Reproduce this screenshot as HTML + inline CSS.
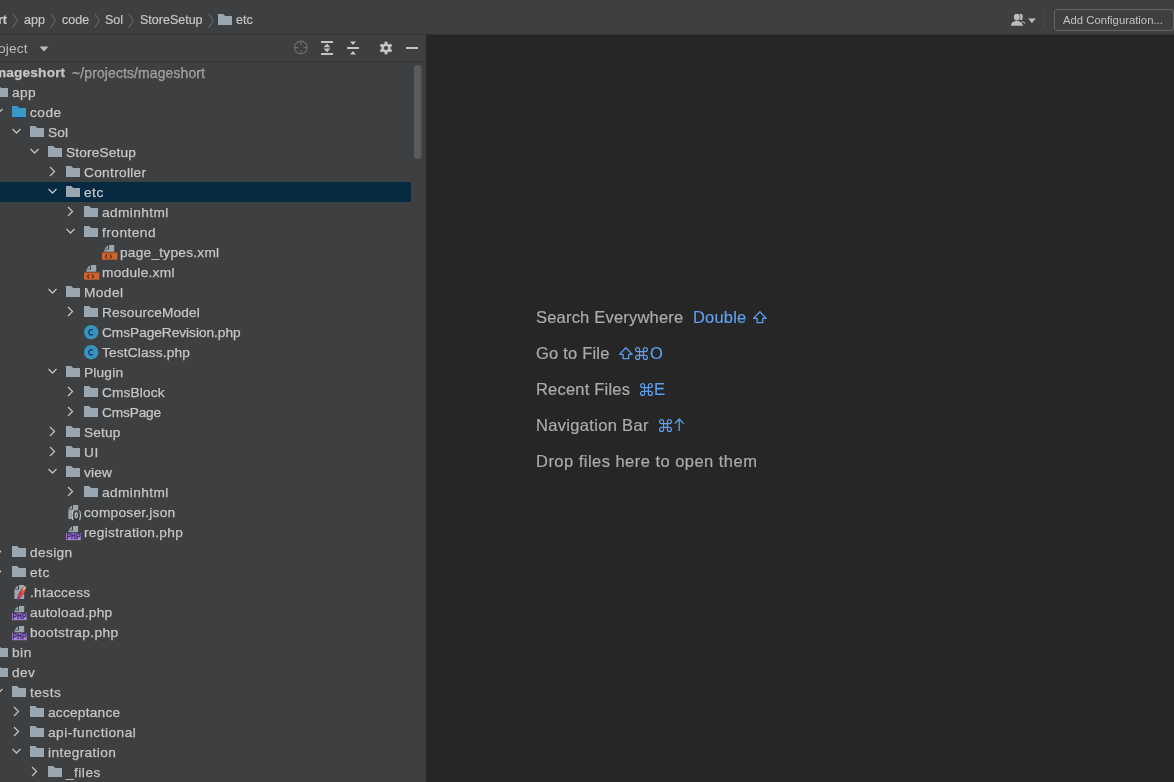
<!DOCTYPE html>
<html><head><meta charset="utf-8"><style>
html,body{margin:0;padding:0;}
body{width:1174px;height:782px;overflow:hidden;position:relative;background:#262626;font-family:"Liberation Sans",sans-serif;}
.ic{position:absolute;display:block;}
#top{position:absolute;left:0;top:0;width:1174px;height:34px;background:#3D3F41;border-bottom:1px solid #313335;}
.bc{will-change:transform;-webkit-text-stroke:0.2px currentColor;position:absolute;top:2px;height:34px;line-height:36px;font-size:12.5px;color:#C6C6C6;white-space:nowrap;}
#panel{position:absolute;left:0;top:35px;width:426px;height:747px;background:#3D3F41;overflow:hidden;}
#hdr{position:absolute;left:0;top:0;width:426px;height:26px;border-bottom:1px solid #323436;}
#div{position:absolute;left:426px;top:35px;width:1px;height:747px;background:#2B2B2B;}
#tree{position:absolute;left:0;top:-35px;width:426px;height:782px;}
.t{will-change:transform;-webkit-text-stroke:0.25px #C6C6C6;position:absolute;height:20px;line-height:20px;font-size:13.7px;letter-spacing:0.15px;color:#C6C6C6;white-space:nowrap;}
.gray{color:#8C8C8C;}
.sel{position:absolute;left:0;width:411px;height:20px;background:#052A42;}
#editor{position:absolute;left:427px;top:35px;width:747px;height:747px;background:#262626;}
.w{will-change:transform;-webkit-text-stroke:0.2px currentColor;position:absolute;height:36px;line-height:36px;font-size:16.5px;color:#ABABAB;white-space:nowrap;}
.k{color:#5B9BE6;}
</style></head><body>
<div id="top">
<div class="bc" style="left:-60px;font-weight:bold;width:67px;text-align:right">mageshort</div>
<svg class="ic" style="left:12px;top:13px" width="7" height="15" viewBox="0 0 7 15"><path d="M0.7 0.5L5.5 7.5L0.7 14.5" stroke="#6E6E6E" stroke-width="1" fill="none"/></svg>
<div class="bc" style="left:24px">app</div>
<svg class="ic" style="left:50px;top:13px" width="7" height="15" viewBox="0 0 7 15"><path d="M0.7 0.5L5.5 7.5L0.7 14.5" stroke="#6E6E6E" stroke-width="1" fill="none"/></svg>
<div class="bc" style="left:62px">code</div>
<svg class="ic" style="left:94px;top:13px" width="7" height="15" viewBox="0 0 7 15"><path d="M0.7 0.5L5.5 7.5L0.7 14.5" stroke="#6E6E6E" stroke-width="1" fill="none"/></svg>
<div class="bc" style="left:105px">Sol</div>
<svg class="ic" style="left:128px;top:13px" width="7" height="15" viewBox="0 0 7 15"><path d="M0.7 0.5L5.5 7.5L0.7 14.5" stroke="#6E6E6E" stroke-width="1" fill="none"/></svg>
<div class="bc" style="left:140px">StoreSetup</div>
<svg class="ic" style="left:208px;top:13px" width="7" height="15" viewBox="0 0 7 15"><path d="M0.7 0.5L5.5 7.5L0.7 14.5" stroke="#6E6E6E" stroke-width="1" fill="none"/></svg>
<svg class="ic" style="left:218px;top:14px" width="14" height="12" viewBox="0 0 14 12"><path d="M0 0H5.2L7.2 2H14V11H0Z" fill="#9AA7B0"/></svg>
<div class="bc" style="left:236px">etc</div>
<svg class="ic" style="left:1010px;top:13px" width="27" height="14" viewBox="0 0 27 14">
<ellipse cx="10.6" cy="3.9" rx="2.2" ry="3.1" fill="#BCBCBC"/>
<path d="M9 8C12 7.6 14.8 8.6 15.2 10.2V10.9L13.2 9.6Z" fill="#BCBCBC"/>
<g stroke="#3D3F41" stroke-width="1.1"><ellipse cx="6.8" cy="4.1" rx="3" ry="3.4"/><path d="M0.8 12.7C1 9.4 3.5 7.9 6.8 7.9C10.1 7.9 12.6 9.4 13 12.7Z"/></g>
<ellipse cx="6.8" cy="4.1" rx="3" ry="3.4" fill="#BCBCBC"/>
<path d="M0.8 12.7C1 9.4 3.5 7.9 6.8 7.9C10.1 7.9 12.6 9.4 13 12.7Z" fill="#BCBCBC"/>
<path d="M18 5.5H25.8L21.9 9.9Z" fill="#BCBCBC"/>
</svg>
<div style="position:absolute;left:1044px;top:12px;width:1px;height:16px;background:repeating-linear-gradient(#4E5052 0 2px,transparent 2px 4px)"></div>
<div style="position:absolute;left:1054px;top:9px;width:118px;height:20px;border:1px solid #626466;border-radius:3px;background:#3D3F41"></div>
<div style="will-change:transform;position:absolute;left:1063px;top:9px;height:22px;line-height:22px;font-size:11.3px;color:#C2C2C2;white-space:nowrap">Add Configuration...</div>
</div>
<div id="panel">
<div id="hdr">
<div style="will-change:transform;position:absolute;left:-16px;top:1px;height:26px;line-height:26px;font-size:13.7px;letter-spacing:0.15px;color:#BBBBBB">Project</div>
<svg class="ic" style="left:39px;top:11px" width="10" height="6" viewBox="0 0 10 6"><path d="M0.5 0.5H9.5L5 5.5Z" fill="#BBBBBB"/></svg>
<svg class="ic" style="left:293px;top:5px" width="16" height="16" viewBox="0 0 16 16"><circle cx="7.8" cy="7.6" r="6.4" stroke="#6E6E6E" stroke-width="1.2" fill="none"/><path d="M7.8 1.6V5M7.8 10.2V13.6M1.6 7.6H5M10.6 7.6H14" stroke="#6E6E6E" stroke-width="1.2"/></svg>
<svg class="ic" style="left:319px;top:5px" width="16" height="16" viewBox="0 0 16 16"><path d="M2 1H14V3H2Z M2 13H14V15H2Z" fill="#C4C4C4"/><path d="M8 3.6L11.4 7.3H4.6Z M8 12.2L11.4 8.5H4.6Z" fill="#C4C4C4"/></svg>
<svg class="ic" style="left:345px;top:5px" width="16" height="16" viewBox="0 0 16 16"><path d="M2 7H14V9H2Z" fill="#C4C4C4"/><path d="M5 1.5H11L8 5Z M5 14.5H11L8 11Z" fill="#C4C4C4"/></svg>
<svg class="ic" style="left:378px;top:5px" width="16" height="16" viewBox="0 0 16 16"><g fill="#C4C4C4"><circle cx="8" cy="8" r="4.6"/><rect x="6.5" y="1.5" width="3" height="13" rx="1"/><rect x="6.5" y="1.5" width="3" height="13" rx="1" transform="rotate(60 8 8)"/><rect x="6.5" y="1.5" width="3" height="13" rx="1" transform="rotate(120 8 8)"/></g><circle cx="8" cy="8" r="2" fill="#3D3F41"/></svg>
<div style="position:absolute;left:406px;top:12px;width:12px;height:2px;background:#C4C4C4"></div>
</div>
<div id="tree">
<div class="t" style="left:-6px;top:63px;font-weight:bold">mageshort</div>
<div class="t gray" style="left:72px;top:63px;font-size:13.9px">~/projects/mageshort</div>
<svg class="ic" style="left:-25px;top:87px" width="12" height="8" viewBox="0 0 12 8"><path d="M1.5 2L5.5 6L9.5 2" stroke="#C2C2C2" stroke-width="1.25" fill="none"/></svg>
<svg class="ic" style="left:-6px;top:86px" width="14" height="12" viewBox="0 0 14 12"><path d="M0 0H5.2L7.2 2H14V11H0Z" fill="#9AA7B0"/></svg>
<div class="t" style="left:12px;top:83px;letter-spacing:0.4px">app</div>
<svg class="ic" style="left:-7px;top:107px" width="12" height="8" viewBox="0 0 12 8"><path d="M1.5 2L5.5 6L9.5 2" stroke="#C2C2C2" stroke-width="1.25" fill="none"/></svg>
<svg class="ic" style="left:12px;top:106px" width="14" height="12" viewBox="0 0 14 12"><path d="M0 0H5.2L7.2 2H14V11H0Z" fill="#3A98C6"/><rect x="3" y="11" width="9" height="1.2" fill="#0B3C8A"/></svg>
<div class="t" style="left:30px;top:103px;letter-spacing:0.483px">code</div>
<svg class="ic" style="left:11px;top:127px" width="12" height="8" viewBox="0 0 12 8"><path d="M1.5 2L5.5 6L9.5 2" stroke="#C2C2C2" stroke-width="1.25" fill="none"/></svg>
<svg class="ic" style="left:30px;top:126px" width="14" height="12" viewBox="0 0 14 12"><path d="M0 0H5.2L7.2 2H14V11H0Z" fill="#9AA7B0"/></svg>
<div class="t" style="left:48px;top:123px;letter-spacing:0.15px">Sol</div>
<svg class="ic" style="left:29px;top:147px" width="12" height="8" viewBox="0 0 12 8"><path d="M1.5 2L5.5 6L9.5 2" stroke="#C2C2C2" stroke-width="1.25" fill="none"/></svg>
<svg class="ic" style="left:48px;top:146px" width="14" height="12" viewBox="0 0 14 12"><path d="M0 0H5.2L7.2 2H14V11H0Z" fill="#9AA7B0"/></svg>
<div class="t" style="left:66px;top:143px;letter-spacing:0.161px">StoreSetup</div>
<svg class="ic" style="left:49px;top:166px" width="8" height="12" viewBox="0 0 8 12"><path d="M1 1L5.5 5.5L1 10" stroke="#C2C2C2" stroke-width="1.25" fill="none"/></svg>
<svg class="ic" style="left:66px;top:166px" width="14" height="12" viewBox="0 0 14 12"><path d="M0 0H5.2L7.2 2H14V11H0Z" fill="#9AA7B0"/></svg>
<div class="t" style="left:84px;top:163px;letter-spacing:0.306px">Controller</div>
<div class="sel" style="top:182px"></div>
<svg class="ic" style="left:47px;top:187px" width="12" height="8" viewBox="0 0 12 8"><path d="M1.5 2L5.5 6L9.5 2" stroke="#C2C2C2" stroke-width="1.25" fill="none"/></svg>
<svg class="ic" style="left:66px;top:186px" width="14" height="12" viewBox="0 0 14 12"><path d="M0 0H5.2L7.2 2H14V11H0Z" fill="#9AA7B0"/></svg>
<div class="t" style="left:84px;top:183px;letter-spacing:0.5px">etc</div>
<svg class="ic" style="left:67px;top:206px" width="8" height="12" viewBox="0 0 8 12"><path d="M1 1L5.5 5.5L1 10" stroke="#C2C2C2" stroke-width="1.25" fill="none"/></svg>
<svg class="ic" style="left:84px;top:206px" width="14" height="12" viewBox="0 0 14 12"><path d="M0 0H5.2L7.2 2H14V11H0Z" fill="#9AA7B0"/></svg>
<div class="t" style="left:102px;top:203px;letter-spacing:0.388px">adminhtml</div>
<svg class="ic" style="left:65px;top:227px" width="12" height="8" viewBox="0 0 12 8"><path d="M1.5 2L5.5 6L9.5 2" stroke="#C2C2C2" stroke-width="1.25" fill="none"/></svg>
<svg class="ic" style="left:84px;top:226px" width="14" height="12" viewBox="0 0 14 12"><path d="M0 0H5.2L7.2 2H14V11H0Z" fill="#9AA7B0"/></svg>
<div class="t" style="left:102px;top:223px;letter-spacing:0.479px">frontend</div>
<svg class="ic" style="left:101.6px;top:244px" width="16" height="16" viewBox="0 0 16 16"><path d="M2.6 4.8L6 1.2V4.8Z" fill="#9AA7B0"/><path d="M7 1H12.2V7.8H2.4V5.6H7Z" fill="#9AA7B0"/><rect x="0" y="8.3" width="15.4" height="7.4" fill="#CC652F"/><rect x="0" y="8.3" width="15.4" height="0.8" fill="#8A4A1E"/><path d="M5.1 10.4L3.4 12.4L5.1 14.4M7.8 10.4L9.6 12.4L7.8 14.4" stroke="#6A2608" stroke-width="1.1" fill="none"/></svg>
<div class="t" style="left:120px;top:243px;letter-spacing:0.25px">page_types.xml</div>
<svg class="ic" style="left:83.6px;top:264px" width="16" height="16" viewBox="0 0 16 16"><path d="M2.6 4.8L6 1.2V4.8Z" fill="#9AA7B0"/><path d="M7 1H12.2V7.8H2.4V5.6H7Z" fill="#9AA7B0"/><rect x="0" y="8.3" width="15.4" height="7.4" fill="#CC652F"/><rect x="0" y="8.3" width="15.4" height="0.8" fill="#8A4A1E"/><path d="M5.1 10.4L3.4 12.4L5.1 14.4M7.8 10.4L9.6 12.4L7.8 14.4" stroke="#6A2608" stroke-width="1.1" fill="none"/></svg>
<div class="t" style="left:102px;top:263px;letter-spacing:0.272px">module.xml</div>
<svg class="ic" style="left:47px;top:287px" width="12" height="8" viewBox="0 0 12 8"><path d="M1.5 2L5.5 6L9.5 2" stroke="#C2C2C2" stroke-width="1.25" fill="none"/></svg>
<svg class="ic" style="left:66px;top:286px" width="14" height="12" viewBox="0 0 14 12"><path d="M0 0H5.2L7.2 2H14V11H0Z" fill="#9AA7B0"/></svg>
<div class="t" style="left:84px;top:283px;letter-spacing:0.425px">Model</div>
<svg class="ic" style="left:67px;top:306px" width="8" height="12" viewBox="0 0 8 12"><path d="M1 1L5.5 5.5L1 10" stroke="#C2C2C2" stroke-width="1.25" fill="none"/></svg>
<svg class="ic" style="left:84px;top:306px" width="14" height="12" viewBox="0 0 14 12"><path d="M0 0H5.2L7.2 2H14V11H0Z" fill="#9AA7B0"/></svg>
<div class="t" style="left:102px;top:303px;letter-spacing:0.17px">ResourceModel</div>
<svg class="ic" style="left:83.8px;top:324.8px" width="16" height="16" viewBox="0 0 16 16"><circle cx="7.2" cy="7.2" r="7.2" fill="#3894BD"/><path d="M8.9 5.3A2.5 2.6 0 1 0 8.9 9.3" stroke="#0F3A78" stroke-width="1.3" fill="none"/></svg>
<div class="t" style="left:102px;top:323px;letter-spacing:-0.033px">CmsPageRevision.php</div>
<svg class="ic" style="left:83.8px;top:344.8px" width="16" height="16" viewBox="0 0 16 16"><circle cx="7.2" cy="7.2" r="7.2" fill="#3894BD"/><path d="M8.9 5.3A2.5 2.6 0 1 0 8.9 9.3" stroke="#0F3A78" stroke-width="1.3" fill="none"/></svg>
<div class="t" style="left:102px;top:343px;letter-spacing:0.167px">TestClass.php</div>
<svg class="ic" style="left:47px;top:367px" width="12" height="8" viewBox="0 0 12 8"><path d="M1.5 2L5.5 6L9.5 2" stroke="#C2C2C2" stroke-width="1.25" fill="none"/></svg>
<svg class="ic" style="left:66px;top:366px" width="14" height="12" viewBox="0 0 14 12"><path d="M0 0H5.2L7.2 2H14V11H0Z" fill="#9AA7B0"/></svg>
<div class="t" style="left:84px;top:363px;letter-spacing:0.19px">Plugin</div>
<svg class="ic" style="left:67px;top:386px" width="8" height="12" viewBox="0 0 8 12"><path d="M1 1L5.5 5.5L1 10" stroke="#C2C2C2" stroke-width="1.25" fill="none"/></svg>
<svg class="ic" style="left:84px;top:386px" width="14" height="12" viewBox="0 0 14 12"><path d="M0 0H5.2L7.2 2H14V11H0Z" fill="#9AA7B0"/></svg>
<div class="t" style="left:102px;top:383px;letter-spacing:0.136px">CmsBlock</div>
<svg class="ic" style="left:67px;top:406px" width="8" height="12" viewBox="0 0 8 12"><path d="M1 1L5.5 5.5L1 10" stroke="#C2C2C2" stroke-width="1.25" fill="none"/></svg>
<svg class="ic" style="left:84px;top:406px" width="14" height="12" viewBox="0 0 14 12"><path d="M0 0H5.2L7.2 2H14V11H0Z" fill="#9AA7B0"/></svg>
<div class="t" style="left:102px;top:403px;letter-spacing:-0.15px">CmsPage</div>
<svg class="ic" style="left:49px;top:426px" width="8" height="12" viewBox="0 0 8 12"><path d="M1 1L5.5 5.5L1 10" stroke="#C2C2C2" stroke-width="1.25" fill="none"/></svg>
<svg class="ic" style="left:66px;top:426px" width="14" height="12" viewBox="0 0 14 12"><path d="M0 0H5.2L7.2 2H14V11H0Z" fill="#9AA7B0"/></svg>
<div class="t" style="left:84px;top:423px;letter-spacing:0.175px">Setup</div>
<svg class="ic" style="left:49px;top:446px" width="8" height="12" viewBox="0 0 8 12"><path d="M1 1L5.5 5.5L1 10" stroke="#C2C2C2" stroke-width="1.25" fill="none"/></svg>
<svg class="ic" style="left:66px;top:446px" width="14" height="12" viewBox="0 0 14 12"><path d="M0 0H5.2L7.2 2H14V11H0Z" fill="#9AA7B0"/></svg>
<div class="t" style="left:84px;top:443px;letter-spacing:0.5px">UI</div>
<svg class="ic" style="left:47px;top:467px" width="12" height="8" viewBox="0 0 12 8"><path d="M1.5 2L5.5 6L9.5 2" stroke="#C2C2C2" stroke-width="1.25" fill="none"/></svg>
<svg class="ic" style="left:66px;top:466px" width="14" height="12" viewBox="0 0 14 12"><path d="M0 0H5.2L7.2 2H14V11H0Z" fill="#9AA7B0"/></svg>
<div class="t" style="left:84px;top:463px;letter-spacing:0.15px">view</div>
<svg class="ic" style="left:67px;top:486px" width="8" height="12" viewBox="0 0 8 12"><path d="M1 1L5.5 5.5L1 10" stroke="#C2C2C2" stroke-width="1.25" fill="none"/></svg>
<svg class="ic" style="left:84px;top:486px" width="14" height="12" viewBox="0 0 14 12"><path d="M0 0H5.2L7.2 2H14V11H0Z" fill="#9AA7B0"/></svg>
<div class="t" style="left:102px;top:483px;letter-spacing:0.388px">adminhtml</div>
<svg class="ic" style="left:66px;top:504px" width="17" height="17" viewBox="0 0 17 17"><path d="M2.6 4.8L6 1.2V4.8Z" fill="#9AA7B0"/><path d="M7 1H12.2V14.9H2.4V5.6H7Z" fill="#9AA7B0"/><ellipse cx="10.3" cy="11.3" rx="5" ry="5" fill="#303234" opacity="0.85"/><path d="M7.4 6.9C6.2 6.9 6.5 8.6 6.4 9.9C6.3 10.8 5.9 11.3 5.4 11.3C5.9 11.3 6.3 11.8 6.4 12.7C6.5 14 6.2 15.7 7.4 15.7M13.2 6.9C14.4 6.9 14.1 8.6 14.2 9.9C14.3 10.8 14.7 11.3 15.2 11.3C14.7 11.3 14.3 11.8 14.2 12.7C14.1 14 14.4 15.7 13.2 15.7" stroke="#C5CBCF" stroke-width="1.2" fill="none"/><ellipse cx="10.3" cy="11.3" rx="1.1" ry="2.4" stroke="#C5CBCF" stroke-width="1.1" fill="none"/></svg>
<div class="t" style="left:84px;top:503px;letter-spacing:0.242px">composer.json</div>
<svg class="ic" style="left:66px;top:525px" width="16" height="16" viewBox="0 0 16 16"><path d="M2.6 4.8L6 1.2V4.8Z" fill="#9AA7B0"/><path d="M7 1H12.2V7.2H2.4V5.6H7Z" fill="#9AA7B0"/><rect x="0" y="8" width="14.8" height="7.2" fill="#A585D2"/><text x="0.5" y="14.4" font-family="Liberation Sans" font-weight="bold" font-size="8.6" textLength="14" lengthAdjust="spacingAndGlyphs" fill="#47307A" stroke="#47307A" stroke-width="0.35">PHP</text></svg>
<div class="t" style="left:84px;top:523px;letter-spacing:0.297px">registration.php</div>
<svg class="ic" style="left:-5px;top:546px" width="8" height="12" viewBox="0 0 8 12"><path d="M1 1L5.5 5.5L1 10" stroke="#C2C2C2" stroke-width="1.25" fill="none"/></svg>
<svg class="ic" style="left:12px;top:546px" width="14" height="12" viewBox="0 0 14 12"><path d="M0 0H5.2L7.2 2H14V11H0Z" fill="#9AA7B0"/></svg>
<div class="t" style="left:30px;top:543px;letter-spacing:0.37px">design</div>
<svg class="ic" style="left:-5px;top:566px" width="8" height="12" viewBox="0 0 8 12"><path d="M1 1L5.5 5.5L1 10" stroke="#C2C2C2" stroke-width="1.25" fill="none"/></svg>
<svg class="ic" style="left:12px;top:566px" width="14" height="12" viewBox="0 0 14 12"><path d="M0 0H5.2L7.2 2H14V11H0Z" fill="#9AA7B0"/></svg>
<div class="t" style="left:30px;top:563px;letter-spacing:0.5px">etc</div>
<svg class="ic" style="left:12px;top:584px" width="17" height="17" viewBox="0 0 17 17"><path d="M2.6 4.8L6 1.2V4.8Z" fill="#9AA7B0"/><path d="M7 1H12.2V15H2.4V5.6H7Z" fill="#9AA7B0"/><path d="M5 15.5C5.5 11 8.5 5 13.8 1.8C14.6 5.5 11.5 11.5 6.5 15.5Z" fill="#9C2C78"/><path d="M6.6 13C8 9 10.5 5 13.8 1.8C14.3 4.5 12.5 9 8.5 12.5Z" fill="#E0622C"/><path d="M10.5 5.5C11.5 4 12.6 2.6 13.8 1.8C14 3.2 13.2 5 12 6.5Z" fill="#F2C35A"/><ellipse cx="8.6" cy="9.8" rx="1.2" ry="1.5" fill="#E8203A"/></svg>
<div class="t" style="left:30px;top:583px;letter-spacing:0.287px">.htaccess</div>
<svg class="ic" style="left:12px;top:605px" width="16" height="16" viewBox="0 0 16 16"><path d="M2.6 4.8L6 1.2V4.8Z" fill="#9AA7B0"/><path d="M7 1H12.2V7.2H2.4V5.6H7Z" fill="#9AA7B0"/><rect x="0" y="8" width="14.8" height="7.2" fill="#A585D2"/><text x="0.5" y="14.4" font-family="Liberation Sans" font-weight="bold" font-size="8.6" textLength="14" lengthAdjust="spacingAndGlyphs" fill="#47307A" stroke="#47307A" stroke-width="0.35">PHP</text></svg>
<div class="t" style="left:30px;top:603px;letter-spacing:0.277px">autoload.php</div>
<svg class="ic" style="left:12px;top:625px" width="16" height="16" viewBox="0 0 16 16"><path d="M2.6 4.8L6 1.2V4.8Z" fill="#9AA7B0"/><path d="M7 1H12.2V7.2H2.4V5.6H7Z" fill="#9AA7B0"/><rect x="0" y="8" width="14.8" height="7.2" fill="#A585D2"/><text x="0.5" y="14.4" font-family="Liberation Sans" font-weight="bold" font-size="8.6" textLength="14" lengthAdjust="spacingAndGlyphs" fill="#47307A" stroke="#47307A" stroke-width="0.35">PHP</text></svg>
<div class="t" style="left:30px;top:623px;letter-spacing:0.358px">bootstrap.php</div>
<svg class="ic" style="left:-23px;top:646px" width="8" height="12" viewBox="0 0 8 12"><path d="M1 1L5.5 5.5L1 10" stroke="#C2C2C2" stroke-width="1.25" fill="none"/></svg>
<svg class="ic" style="left:-6px;top:646px" width="14" height="12" viewBox="0 0 14 12"><path d="M0 0H5.2L7.2 2H14V11H0Z" fill="#9AA7B0"/></svg>
<div class="t" style="left:12px;top:643px;letter-spacing:0.5px">bin</div>
<svg class="ic" style="left:-23px;top:666px" width="8" height="12" viewBox="0 0 8 12"><path d="M1 1L5.5 5.5L1 10" stroke="#C2C2C2" stroke-width="1.25" fill="none"/></svg>
<svg class="ic" style="left:-6px;top:666px" width="14" height="12" viewBox="0 0 14 12"><path d="M0 0H5.2L7.2 2H14V11H0Z" fill="#9AA7B0"/></svg>
<div class="t" style="left:12px;top:663px;letter-spacing:0.45px">dev</div>
<svg class="ic" style="left:-7px;top:687px" width="12" height="8" viewBox="0 0 12 8"><path d="M1.5 2L5.5 6L9.5 2" stroke="#C2C2C2" stroke-width="1.25" fill="none"/></svg>
<svg class="ic" style="left:12px;top:686px" width="14" height="12" viewBox="0 0 14 12"><path d="M0 0H5.2L7.2 2H14V11H0Z" fill="#9AA7B0"/></svg>
<div class="t" style="left:30px;top:683px;letter-spacing:0.475px">tests</div>
<svg class="ic" style="left:13px;top:706px" width="8" height="12" viewBox="0 0 8 12"><path d="M1 1L5.5 5.5L1 10" stroke="#C2C2C2" stroke-width="1.25" fill="none"/></svg>
<svg class="ic" style="left:30px;top:706px" width="14" height="12" viewBox="0 0 14 12"><path d="M0 0H5.2L7.2 2H14V11H0Z" fill="#9AA7B0"/></svg>
<div class="t" style="left:48px;top:703px;letter-spacing:0.228px">acceptance</div>
<svg class="ic" style="left:13px;top:726px" width="8" height="12" viewBox="0 0 8 12"><path d="M1 1L5.5 5.5L1 10" stroke="#C2C2C2" stroke-width="1.25" fill="none"/></svg>
<svg class="ic" style="left:30px;top:726px" width="14" height="12" viewBox="0 0 14 12"><path d="M0 0H5.2L7.2 2H14V11H0Z" fill="#9AA7B0"/></svg>
<div class="t" style="left:48px;top:723px;letter-spacing:0.496px">api-functional</div>
<svg class="ic" style="left:11px;top:747px" width="12" height="8" viewBox="0 0 12 8"><path d="M1.5 2L5.5 6L9.5 2" stroke="#C2C2C2" stroke-width="1.25" fill="none"/></svg>
<svg class="ic" style="left:30px;top:746px" width="14" height="12" viewBox="0 0 14 12"><path d="M0 0H5.2L7.2 2H14V11H0Z" fill="#9AA7B0"/></svg>
<div class="t" style="left:48px;top:743px;letter-spacing:0.39px">integration</div>
<svg class="ic" style="left:31px;top:766px" width="8" height="12" viewBox="0 0 8 12"><path d="M1 1L5.5 5.5L1 10" stroke="#C2C2C2" stroke-width="1.25" fill="none"/></svg>
<svg class="ic" style="left:48px;top:766px" width="14" height="12" viewBox="0 0 14 12"><path d="M0 0H5.2L7.2 2H14V11H0Z" fill="#9AA7B0"/></svg>
<div class="t" style="left:66px;top:763px;letter-spacing:0.47px">_files</div>
</div>
<div style="position:absolute;left:414px;top:30px;width:8px;height:94px;border-radius:3px;background:#595C5E;box-shadow:inset -1.5px 0 0 #4B4E50"></div>
</div>
<div id="div"></div>
<div id="editor"></div>
<div class="w" style="left:536px;top:299px;letter-spacing:0.2px;">Search Everywhere</div>
<div class="w" style="left:693px;top:299px;letter-spacing:0.2px;color:#5E9EEA;">Double</div>
<svg class="ic" style="left:753.2px;top:310.5px" width="15" height="13" viewBox="0 0 15 13"><path d="M6.9 0.8L13.2 7.4H9.7V11.6H4.1V7.4H0.6Z" stroke="#5E9EEA" stroke-width="1.3" stroke-linejoin="round" fill="none"/></svg>
<div class="w" style="left:536px;top:335px;letter-spacing:0.2px;">Go to File</div>
<svg class="ic" style="left:619.3px;top:346.5px" width="15" height="13" viewBox="0 0 15 13"><path d="M6.9 0.8L13.2 7.4H9.7V11.6H4.1V7.4H0.6Z" stroke="#5E9EEA" stroke-width="1.3" stroke-linejoin="round" fill="none"/></svg>
<svg class="ic" style="left:635.4px;top:346.5px" width="13" height="13" viewBox="0 0 13 13"><path d="M4.6 10.4V2.6A2 2 0 1 0 2.6 4.6H10.4A2 2 0 1 0 8.4 2.6V10.4A2 2 0 1 0 10.4 8.4H2.6A2 2 0 1 0 4.6 10.4Z" stroke="#5E9EEA" stroke-width="1.2" fill="none"/></svg>
<div class="w" style="left:650.2px;top:335px;letter-spacing:0px;color:#5E9EEA;">O</div>
<div class="w" style="left:536px;top:371px;letter-spacing:0.2px;">Recent Files</div>
<svg class="ic" style="left:640.3px;top:382.5px" width="13" height="13" viewBox="0 0 13 13"><path d="M4.6 10.4V2.6A2 2 0 1 0 2.6 4.6H10.4A2 2 0 1 0 8.4 2.6V10.4A2 2 0 1 0 10.4 8.4H2.6A2 2 0 1 0 4.6 10.4Z" stroke="#5E9EEA" stroke-width="1.2" fill="none"/></svg>
<div class="w" style="left:653.8px;top:371px;letter-spacing:0px;color:#5E9EEA;">E</div>
<div class="w" style="left:536px;top:407px;letter-spacing:0.32px;">Navigation Bar</div>
<svg class="ic" style="left:658.6px;top:418.5px" width="13" height="13" viewBox="0 0 13 13"><path d="M4.6 10.4V2.6A2 2 0 1 0 2.6 4.6H10.4A2 2 0 1 0 8.4 2.6V10.4A2 2 0 1 0 10.4 8.4H2.6A2 2 0 1 0 4.6 10.4Z" stroke="#5E9EEA" stroke-width="1.2" fill="none"/></svg>
<svg class="ic" style="left:674px;top:418px" width="12" height="14" viewBox="0 0 12 14"><path d="M5.2 1V13M0.8 5.6L5.2 1L9.6 5.6" stroke="#5E9EEA" stroke-width="1.3" fill="none"/></svg>
<div class="w" style="left:536px;top:443px;letter-spacing:0.47px;">Drop files here to open them</div>
</body></html>
